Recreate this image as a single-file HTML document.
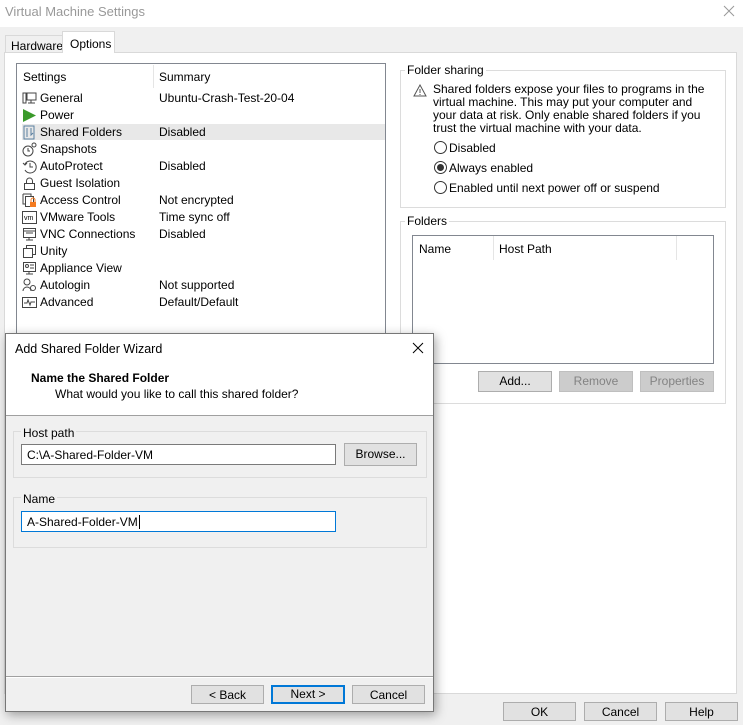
<!DOCTYPE html>
<html><head><meta charset="utf-8"><style>
*{box-sizing:border-box;margin:0;padding:0}
body{width:743px;height:725px;background:#f0f0f0;position:relative;overflow:hidden;font-family:"Liberation Sans",sans-serif;font-size:12px;color:#000}
.a{position:absolute}
.btn{position:absolute;background:#e1e1e1;border:1px solid #adadad;text-align:center;line-height:18px;font-size:12px}
.dis{color:#838383;background:#cccccc;border-color:#bfbfbf}
.grp{position:absolute;border:1px solid #dcdcdc}
.gl{position:absolute;top:-8px;left:6px;padding:0 2px;line-height:14px}
.row{position:absolute;left:22px;height:17px;line-height:17px;width:363px}
.row .ic{position:absolute;left:0;top:1px;width:15px;height:15px}
.row .n{position:absolute;left:18px}
.row .s{position:absolute;left:137px}
.rad{position:absolute;width:13px;height:13px;border:1px solid #333;border-radius:50%;background:#fff}
</style></head><body>
<div class="a" style="left:0;top:0;width:743px;height:27px;background:#fff"></div>
<div class="a" style="left:5px;top:4px;font-size:13px;color:#999">Virtual Machine Settings</div>
<svg class="a" style="left:723px;top:5px" width="12" height="12"><path d="M1 1L11 11M11 1L1 11" stroke="#999" stroke-width="1"/></svg>

<div class="a" style="left:5px;top:35px;width:58px;height:18px;border:1px solid #d9d9d9;border-bottom:none;background:#f0f0f0;padding:3px 0 0 5px">Hardware</div>
<div class="a" style="left:62px;top:31px;width:53px;height:22px;border:1px solid #d9d9d9;border-bottom:none;background:#fff;padding:5px 0 0 7px">Options</div>
<div class="a" style="left:4px;top:52px;width:733px;height:642px;background:#fff;border:1px solid #d9d9d9"></div>
<div class="a" style="left:63px;top:52px;width:51px;height:2px;background:#fff"></div>

<div class="a" style="left:16px;top:63px;width:370px;height:290px;border:1px solid #828790;background:#fff"></div>
<div class="a" style="left:23px;top:70px">Settings</div>
<div class="a" style="left:153px;top:65px;width:1px;height:23px;background:#e5e5e5"></div>
<div class="a" style="left:159px;top:70px">Summary</div>
<div class="a" style="left:22px;top:124px;width:363px;height:16px;background:#e8e8e8"></div>

<div class="row" style="top:90px"><svg class="ic"><rect x="1" y="2" width="3" height="10" fill="none" stroke="#444"/><rect x="5" y="2" width="9" height="7" fill="none" stroke="#444"/><path d="M9 9v3M6 12h7" stroke="#444"/></svg><span class="n">General</span><span class="s">Ubuntu-Crash-Test-20-04</span></div>
<div class="row" style="top:107px"><svg class="ic"><path d="M1 1L14 7.5L1 14Z" fill="#3a9a2a"/></svg><span class="n">Power</span></div>
<div class="row" style="top:124px"><svg class="ic"><path d="M2 1h10v13H2z" fill="none" stroke="#5a7fa0"/><path d="M5 3v9M9 3v7l2-2" fill="none" stroke="#5a7fa0"/></svg><span class="n">Shared Folders</span><span class="s">Disabled</span></div>
<div class="row" style="top:141px"><svg class="ic"><circle cx="6" cy="9" r="5" fill="none" stroke="#444"/><path d="M6 6v3h2" stroke="#444" fill="none"/><circle cx="12" cy="3" r="2" fill="none" stroke="#444"/></svg><span class="n">Snapshots</span></div>
<div class="row" style="top:158px"><svg class="ic"><path d="M3 5A6 6 0 1 1 3 11" fill="none" stroke="#444"/><path d="M1 4l2 2 2-2" fill="none" stroke="#444"/><path d="M8 4v4h3" fill="none" stroke="#444"/></svg><span class="n">AutoProtect</span><span class="s">Disabled</span></div>
<div class="row" style="top:175px"><svg class="ic"><rect x="2.5" y="7.5" width="10" height="6" fill="none" stroke="#444"/><path d="M4.5 7.5V5a3 3 0 0 1 6 0v2.5" fill="none" stroke="#444"/></svg><span class="n">Guest Isolation</span></div>
<div class="row" style="top:192px"><svg class="ic"><path d="M1 1h8v2M1 1v10h3" fill="none" stroke="#444"/><rect x="3.5" y="3.5" width="8" height="10" fill="#fff" stroke="#444"/><rect x="8" y="9" width="6" height="5" fill="#f47a20"/><path d="M9 9V7a2 2 0 0 1 4 0v2" stroke="#f47a20" fill="none"/></svg><span class="n">Access Control</span><span class="s">Not encrypted</span></div>
<div class="row" style="top:209px"><svg class="ic"><rect x="0.5" y="1.5" width="14" height="12" fill="none" stroke="#444"/><text x="2" y="10" font-size="7" font-family="Liberation Sans">vm</text></svg><span class="n">VMware Tools</span><span class="s">Time sync off</span></div>
<div class="row" style="top:226px"><svg class="ic"><rect x="1.5" y="1.5" width="12" height="9" fill="none" stroke="#444"/><path d="M4 6h7M7 10v3M4 13h7M1 4h13" stroke="#444"/></svg><span class="n">VNC Connections</span><span class="s">Disabled</span></div>
<div class="row" style="top:243px"><svg class="ic"><rect x="4.5" y="1.5" width="9" height="9" fill="none" stroke="#444"/><rect x="1.5" y="4.5" width="9" height="9" fill="#fff" stroke="#444"/></svg><span class="n">Unity</span></div>
<div class="row" style="top:260px"><svg class="ic"><rect x="1.5" y="1.5" width="12" height="9" fill="none" stroke="#444"/><circle cx="5" cy="5" r="1.5" fill="none" stroke="#444"/><path d="M8 4h4M8 7h4M7 10v3M4 13h7" stroke="#444"/></svg><span class="n">Appliance View</span></div>
<div class="row" style="top:277px"><svg class="ic"><circle cx="5" cy="4" r="3" fill="none" stroke="#444"/><path d="M1 13a4 4 0 0 1 8 0" fill="none" stroke="#444"/><circle cx="11" cy="10" r="2.5" fill="none" stroke="#444"/></svg><span class="n">Autologin</span><span class="s">Not supported</span></div>
<div class="row" style="top:294px"><svg class="ic"><rect x="0.5" y="2.5" width="14" height="10" fill="none" stroke="#444"/><path d="M2 8h3l1-3 2 5 1-3h4" fill="none" stroke="#444"/></svg><span class="n">Advanced</span><span class="s">Default/Default</span></div>

<div class="grp" style="left:400px;top:70px;width:326px;height:138px"><span class="gl" style="left:4px;background:#fff">Folder sharing</span></div>
<svg class="a" style="left:413px;top:84px" width="14" height="13"><path d="M7 1L13 12H1Z" fill="none" stroke="#555"/><path d="M7 5v4M7 10v1" stroke="#555"/></svg>
<div class="a" style="left:433px;top:83px;line-height:13px;width:285px">Shared folders expose your files to programs in the<br>virtual machine. This may put your computer and<br>your data at risk. Only enable shared folders if you<br>trust the virtual machine with your data.</div>
<div class="rad" style="left:434px;top:141px"></div><div class="a" style="left:449px;top:141px">Disabled</div>
<div class="rad" style="left:434px;top:161px"></div><div class="a" style="left:437px;top:164px;width:7px;height:7px;border-radius:50%;background:#333"></div><div class="a" style="left:449px;top:161px">Always enabled</div>
<div class="rad" style="left:434px;top:181px"></div><div class="a" style="left:449px;top:181px">Enabled until next power off or suspend</div>

<div class="grp" style="left:400px;top:221px;width:326px;height:183px"><span class="gl" style="left:4px;background:#fff">Folders</span></div>
<div class="a" style="left:412px;top:235px;width:302px;height:129px;border:1px solid #828790;background:#fff"></div>
<div class="a" style="left:419px;top:242px">Name</div>
<div class="a" style="left:493px;top:236px;width:1px;height:24px;background:#e5e5e5"></div>
<div class="a" style="left:499px;top:242px">Host Path</div>
<div class="a" style="left:676px;top:236px;width:1px;height:24px;background:#e5e5e5"></div>
<div class="btn" style="left:478px;top:371px;width:74px;height:21px">Add...</div>
<div class="btn dis" style="left:559px;top:371px;width:74px;height:21px">Remove</div>
<div class="btn dis" style="left:640px;top:371px;width:74px;height:21px">Properties</div>

<div class="btn" style="left:503px;top:702px;width:73px;height:19px">OK</div>
<div class="btn" style="left:584px;top:702px;width:73px;height:19px">Cancel</div>
<div class="btn" style="left:665px;top:702px;width:73px;height:19px">Help</div>

<div class="a" style="left:5px;top:333px;width:429px;height:379px;background:#f0f0f0;border:1px solid #777;box-shadow:2px 3px 10px rgba(0,0,0,0.35)"></div>
<div class="a" style="left:6px;top:334px;width:427px;height:82px;background:#fff;border-bottom:1px solid #a0a0a0"></div>
<div class="a" style="left:15px;top:342px;font-size:12.5px">Add Shared Folder Wizard</div>
<svg class="a" style="left:412px;top:342px" width="12" height="12"><path d="M1 1L11 11M11 1L1 11" stroke="#000" stroke-width="1"/></svg>
<div class="a" style="left:31px;top:371px;font-weight:bold">Name the Shared Folder</div>
<div class="a" style="left:55px;top:387px">What would you like to call this shared folder?</div>

<div class="grp" style="left:13px;top:431px;width:414px;height:47px"><span class="gl" style="left:7px;top:-6px;background:#f0f0f0">Host path</span></div>
<div class="a" style="left:21px;top:444px;width:315px;height:21px;border:1px solid #7a7a7a;background:#fff;padding:3px 0 0 5px">C:\A-Shared-Folder-VM</div>
<div class="btn" style="left:344px;top:443px;width:73px;height:23px;line-height:21px">Browse...</div>
<div class="grp" style="left:13px;top:497px;width:414px;height:51px"><span class="gl" style="left:7px;top:-6px;background:#f0f0f0">Name</span></div>
<div class="a" style="left:21px;top:511px;width:315px;height:21px;border:1px solid #0078d7;background:#fff;padding:3px 0 0 5px">A-Shared-Folder-VM<span style="border-left:1px solid #000;margin-left:1px"></span></div>

<div class="a" style="left:6px;top:676px;width:427px;height:2px;border-top:1px solid #a0a0a0;border-bottom:1px solid #fff"></div>
<div class="btn" style="left:191px;top:685px;width:73px;height:19px">&lt; Back</div>
<div class="btn" style="left:271px;top:685px;width:74px;height:19px;border:2px solid #0078d7;line-height:15px">Next &gt;</div>
<div class="btn" style="left:352px;top:685px;width:73px;height:19px">Cancel</div>
</body></html>
